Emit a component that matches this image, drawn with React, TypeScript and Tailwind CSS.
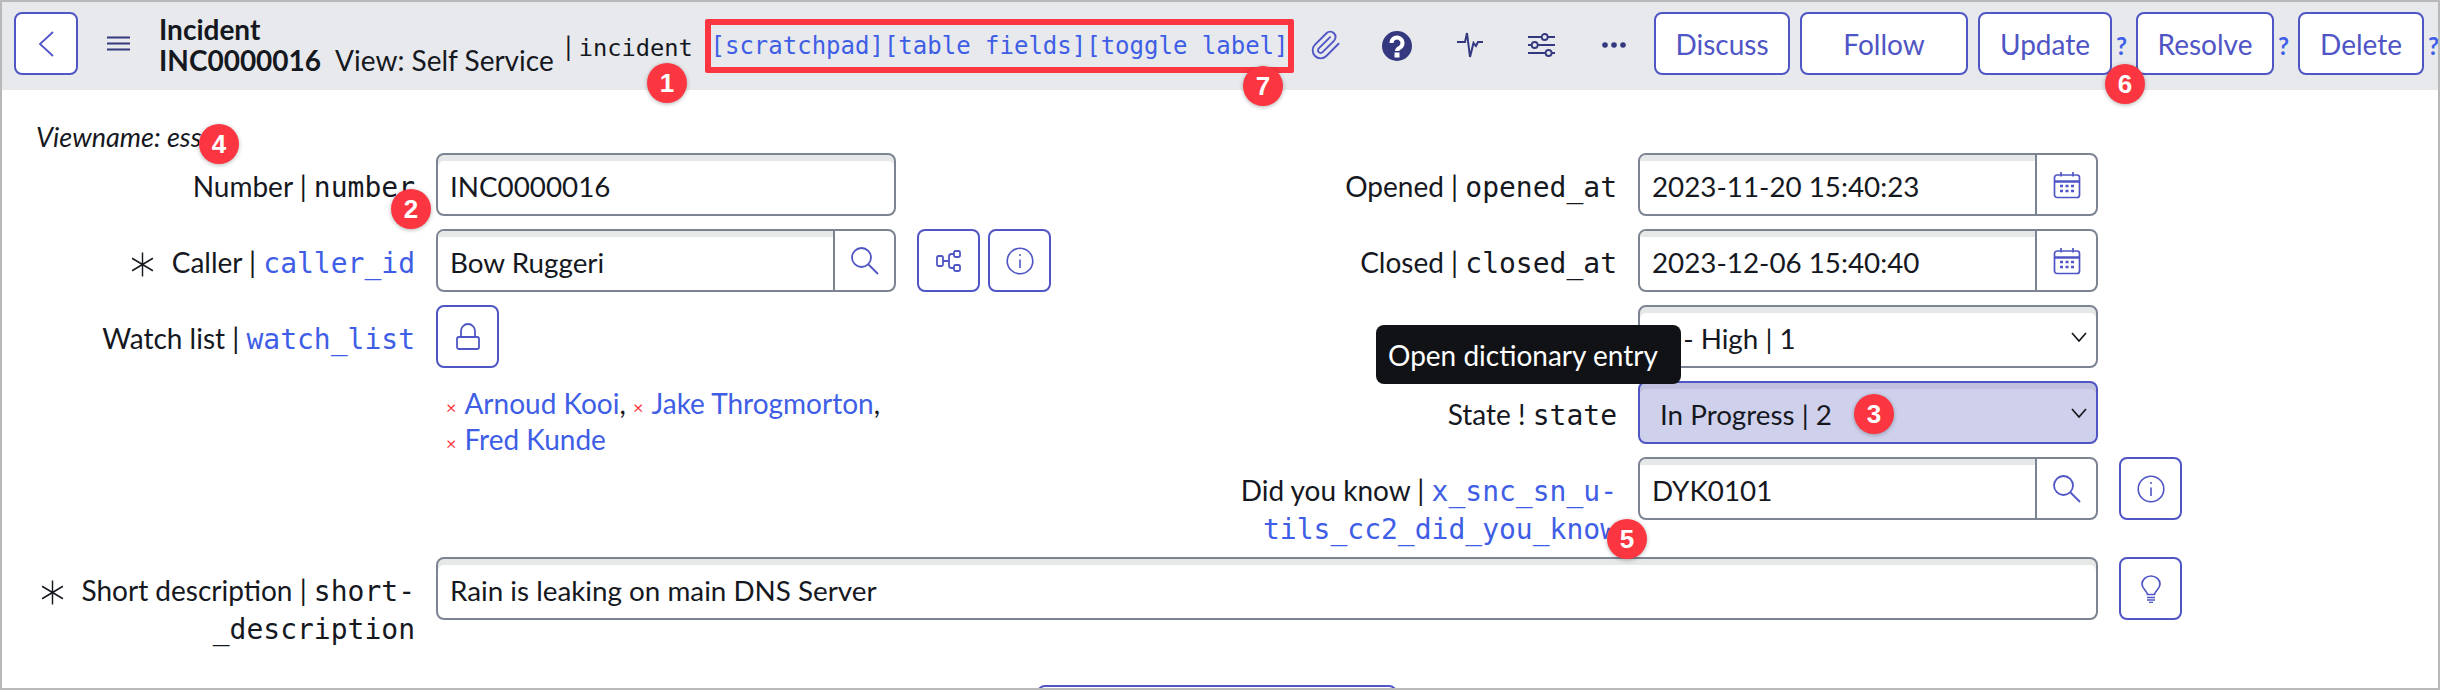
import type { ReactNode } from "react";

const Mono = ({ children, blue }: { children: ReactNode; blue?: boolean }) => (
  <span className={`font-['DejaVu_Sans_Mono',monospace] text-[28px] ${blue ? "text-[#3f5ee6]" : ""}`}>
    {children}
  </span>
);

const Badge = ({ n, x, y }: { n: number; x: number; y: number }) => (
  <span
    className="absolute flex h-10 w-10 -translate-x-1/2 -translate-y-1/2 items-center justify-center rounded-full bg-[#fb3640] font-['Liberation_Sans',sans-serif] text-[26px] font-bold text-white shadow-[0_1px_4px_rgba(0,0,0,0.3)]"
    style={{ left: x, top: y }}
  >
    {n}
  </span>
);

const Star = () => (
  <svg viewBox="0 0 24 24" className="mr-[17px] inline-block h-[25px] w-[25px] -translate-y-[1px] align-middle" fill="none" stroke="#15181e" strokeWidth="1.4">
    <path d="M12 0.5v23M2 6l20 12M22 6L2 18" />
  </svg>
);

const HeaderBtn = ({ children, w }: { children: ReactNode; w: string }) => (
  <button className={`-mt-[5px] flex h-[63px] shrink-0 items-center justify-center rounded-lg border-2 border-[#4f55c4] bg-white text-[28px] text-[#4f55c4] ${w}`}>
    {children}
  </button>
);

const Help = () => <span className="w-[24px] shrink-0 pl-[4px] text-[24px] font-bold text-[#3f5ee6]">?</span>;

const IconBtn = ({ children }: { children: ReactNode }) => (
  <button className="flex h-[63px] w-[63px] shrink-0 items-center justify-center rounded-lg border-2 border-[#4f55c4] bg-white">
    {children}
  </button>
);

const SearchIcon = () => (
  <svg viewBox="0 0 28 28" className="h-7 w-7" fill="none" stroke="#4f55c4" strokeWidth="1.8">
    <circle cx="10.500" cy="10.500" r="9.500" />
    <path d="M17.500 17.500L27 27" />
  </svg>
);

const InfoIcon = () => (
  <svg viewBox="0 0 28 28" className="h-7 w-7" fill="none" stroke="#4f55c4" strokeWidth="1.6">
    <circle cx="14" cy="14" r="12.800" />
    <path d="M14 12.500v8.500" />
    <circle cx="14" cy="8" r="1" fill="#4f55c4" stroke="none" />
  </svg>
);

const TreeIcon = () => (
  <svg viewBox="0 0 25 22" className="h-[22px] w-[25px]" fill="none" stroke="#4f55c4" strokeWidth="1.800">
    <rect x="1" y="6" width="6" height="10" rx="1.500" />
    <rect x="18" y="1" width="6" height="6" rx="1.500" />
    <rect x="18" y="15" width="6" height="6" rx="1.500" />
    <path d="M7 11h6M18 4h-2.500a2.500 2.500 0 0 0-2.500 2.500v9a2.500 2.500 0 0 0 2.500 2.500H18" />
  </svg>
);

const CalendarIcon = () => (
  <svg viewBox="0 0 28 28" className="h-7 w-7" fill="none" stroke="#4f55c4" strokeWidth="1.7">
    <rect x="1.500" y="4" width="25" height="22.500" rx="2.500" />
    <path d="M1.500 10.500h25" strokeWidth="2.500" />
    <path d="M8 1v4.500M20 1v4.500" />
    <path d="M7 15h3M12.500 15h3M18 15h3M7 20h3M12.500 20h3M18 20h3" strokeWidth="2.600" />
  </svg>
);

const Chevron = () => (
  <svg viewBox="0 0 16 10" className="h-[10px] w-[16px]" fill="none" stroke="#15181e" strokeWidth="1.700">
    <path d="M1 1l7 8 7-8" />
  </svg>
);

const inputBox = "h-[63px] rounded-lg border-2 border-[#7c8492] bg-white";
const stripe = "shadow-[inset_0_6px_0_#e6e8e8]";

const TextInput = ({ value, className }: { value: string; className: string }) => (
  <div className={`flex items-center pt-[4px] pl-[12px] text-[27.8px] ${inputBox} ${stripe} ${className}`}>{value}</div>
);

const AddonInput = ({ value, children }: { value: string; children: ReactNode }) => (
  <div className={`flex w-[460px] shrink-0 overflow-hidden ${inputBox}`}>
    <div className={`flex flex-1 items-center pt-[4px] pl-[12px] text-[27.8px] ${stripe}`}>{value}</div>
    <div className="flex w-[61px] items-center justify-center border-l-2 border-[#7c8492]">{children}</div>
  </div>
);

const SelectBox = ({ value, active }: { value: string; active?: boolean }) => (
  <div
    className={`flex h-[63px] w-[460px] shrink-0 items-center justify-between rounded-lg border-2 pl-[20px] pr-[9px] text-[27.8px] ${
      active
        ? "border-[#4f55c4] bg-[#cfd1ec] shadow-[inset_0_6px_0_#bfc1de]"
        : "border-[#7c8492] bg-white shadow-[inset_0_6px_0_#e6e8e8]"
    }`}
  >
    <span className="pt-[4px]">{value}</span>
    <Chevron />
  </div>
);

const Row = ({ label, children }: { label: ReactNode; children: ReactNode }) => (
  <div className="flex gap-[21px]">
    <div className="w-[379px] shrink-0 pt-[15px] text-right text-[28px] leading-[36px] whitespace-nowrap">{label}</div>
    <div className="flex flex-1 gap-[8px]">{children}</div>
  </div>
);

const Person = ({ name, comma }: { name: string; comma?: boolean }) => (
  <span className="whitespace-nowrap">
    <span className="mr-[8px] text-[18px] leading-none text-[#fb3640]">×</span>
    <span className="text-[#3f5ee6]">{name}</span>
    {comma && ","}
  </span>
);

export default function App() {
  return (
    <div className="relative h-[690px] w-[2440px] overflow-hidden border-2 border-[#b9b9b9] bg-white font-['Lato',sans-serif] text-[#15181e]">
      <header className="flex h-[88px] items-center bg-[#e8e9ed] pl-[12px]">
        <button className="-mt-[5px] flex h-[63px] w-[64px] shrink-0 items-center justify-center rounded-lg border-2 border-[#4f55c4] bg-white">
          <svg viewBox="0 0 16 26" className="h-[26px] w-4" fill="none" stroke="#4f55c4" strokeWidth="1.800">
            <path d="M15 1L2 13l13 12" />
          </svg>
        </button>
        <svg viewBox="0 0 23 15" className="-mt-[5px] ml-[29px] h-[15px] w-[23px] shrink-0" fill="none" stroke="#33387f" strokeWidth="2.200">
          <path d="M0 1.500h23M0 7.500h23M0 13.500h23" />
        </svg>
        <div className="-mt-[2px] ml-[29px] w-[406px] shrink-0 text-[28px] leading-[31px]">
          <div className="font-bold">Incident</div>
          <div className="whitespace-nowrap">
            <span className="font-bold">INC0000016</span>
            <span className="ml-[14px]">View: Self Service</span>
          </div>
        </div>
        <div className="w-[140px] shrink-0 whitespace-nowrap text-[27px]">
          | <span className="font-['DejaVu_Sans_Mono',monospace] text-[23.7px]">incident</span>
        </div>
        <div className="flex h-[54px] w-[589px] shrink-0 items-center justify-center rounded-[2px] border-[6px] border-[#fb3640] font-['DejaVu_Sans_Mono',monospace] text-[24px] whitespace-nowrap text-[#3f5ee6]">
          [scratchpad][table fields][toggle label]
        </div>
        <svg viewBox="0 0 24 24" className="-mt-[3px] ml-[16px] h-8 w-8 shrink-0" fill="none" stroke="#4f55c4" strokeWidth="1.400" strokeLinecap="round" strokeLinejoin="round">
          <path d="M21.440 11.050l-9.190 9.190a6 6 0 0 1-8.490-8.490l8.570-8.570A4 4 0 1 1 18 8.840l-8.590 8.570a2 2 0 0 1-2.830-2.830l8.490-8.480" />
        </svg>
        <svg viewBox="0 0 30 30" className="ml-[40px] h-[30px] w-[30px] shrink-0">
          <circle cx="15" cy="15" r="15" fill="#33387f" />
          <path d="M9.500 12a5.500 5.500 0 1 1 8.500 4.600c-1.800 1-3 1.600-3 3.400" fill="none" stroke="#fff" strokeWidth="4" />
          <rect x="12.500" y="21.500" width="5" height="5" fill="#fff" />
        </svg>
        <svg viewBox="0 0 26 26" className="-mt-[3px] ml-[45px] h-[26px] w-[26px] shrink-0" fill="none" stroke="#33387f" strokeWidth="2">
          <path d="M0 10h8l2-9 3 24 3.500-14 2.500 3 2-4h5" />
        </svg>
        <svg viewBox="0 0 27 24" className="-mt-[3px] ml-[45px] h-6 w-[27px] shrink-0" fill="none" stroke="#33387f" strokeWidth="1.800">
          <path d="M0 4h27M0 12h27M0 20h27" />
          <circle cx="16.700" cy="4" r="3" fill="#e8e9ed" />
          <circle cx="6.700" cy="12" r="3" fill="#e8e9ed" />
          <circle cx="20.600" cy="20" r="3" fill="#e8e9ed" />
        </svg>
        <svg viewBox="0 0 24 6" className="-mt-[3px] ml-[47px] h-[6px] w-6 shrink-0" fill="#33387f">
          <circle cx="3" cy="3" r="2.800" />
          <circle cx="12" cy="3" r="2.800" />
          <circle cx="21" cy="3" r="2.800" />
        </svg>
        <div className="ml-[28px] flex shrink-0 items-center gap-[10px]">
          <HeaderBtn w="w-[136px]">Discuss</HeaderBtn>
          <HeaderBtn w="w-[168px]">Follow</HeaderBtn>
          <HeaderBtn w="w-[134px]">Update</HeaderBtn>
        </div>
        <Help />
        <HeaderBtn w="w-[138px]">Resolve</HeaderBtn>
        <Help />
        <HeaderBtn w="w-[126px]">Delete</HeaderBtn>
        <Help />
      </header>

      <main className="pl-[34px]">
        <div className="h-[63px] pt-[29px] text-[27px] leading-[36px] italic">Viewname: ess</div>
        <div className="flex">
          <div className="flex w-[1202px] shrink-0 flex-col gap-[13px]">
            <Row label={<>Number | <Mono>number</Mono></>}>
              <TextInput value="INC0000016" className="w-[460px]" />
            </Row>
            <Row label={<><Star />Caller | <Mono blue>caller_id</Mono></>}>
              <AddonInput value="Bow Ruggeri"><SearchIcon /></AddonInput>
              <div className="ml-[13px]"><IconBtn><TreeIcon /></IconBtn></div>
              <IconBtn><InfoIcon /></IconBtn>
            </Row>
            <Row label={<>Watch list | <Mono blue>watch_list</Mono></>}>
              <div>
                <IconBtn>
                  <svg viewBox="0 0 24 27" className="h-[27px] w-6" fill="none" stroke="#4f55c4" strokeWidth="1.800">
                    <rect x="1" y="14" width="22" height="12" rx="2" />
                    <path d="M5 14V8a7 7 0 0 1 14 0v6" />
                  </svg>
                </IconBtn>
                <div className="mt-[17px] w-[460px] pl-[10px] text-[28px] leading-[36px]">
                  <Person name="Arnoud Kooi" comma /> <Person name="Jake Throgmorton" comma /> <Person name="Fred Kunde" />
                </div>
              </div>
            </Row>
          </div>
          <div className="flex w-[960px] shrink-0 flex-col gap-[13px]">
            <Row label={<>Opened | <Mono>opened_at</Mono></>}>
              <AddonInput value="2023-11-20 15:40:23"><CalendarIcon /></AddonInput>
            </Row>
            <Row label={<>Closed | <Mono>closed_at</Mono></>}>
              <AddonInput value="2023-12-06 15:40:40"><CalendarIcon /></AddonInput>
            </Row>
            <Row label="">
              <SelectBox value="1 - High | 1" />
            </Row>
            <Row label={<>State ! <Mono>state</Mono></>}>
              <SelectBox value="In Progress | 2" active />
            </Row>
            <Row label={<>Did you know | <Mono blue>x_snc_sn_u-<br />tils_cc2_did_you_know</Mono></>}>
              <AddonInput value="DYK0101"><SearchIcon /></AddonInput>
              <div className="ml-[13px]"><IconBtn><InfoIcon /></IconBtn></div>
            </Row>
          </div>
        </div>
        <div className="mt-[9px] w-[2146px]">
          <Row label={<><Star />Short description | <Mono>short-<br />_description</Mono></>}>
            <TextInput value="Rain is leaking on main DNS Server" className="flex-1" />
            <div className="ml-[13px]">
              <IconBtn>
                <svg viewBox="0 0 20 28" className="h-7 w-5" fill="none" stroke="#4f55c4" strokeWidth="1.700">
                  <path d="M6.500 19.500c0-3.500-5.500-5-5.500-10.500a9 8 0 0 1 18 0c0 5.500-5.500 7-5.500 10.500z" />
                  <path d="M6 22.500h8M6 25h8M8 27.500h4" />
                </svg>
              </IconBtn>
            </div>
          </Row>
        </div>
        <button className="mt-[37px] ml-[1001px] h-[63px] w-[360px] rounded-lg border-2 border-[#4f55c4] bg-white" />
      </main>

      <div className="absolute top-[323px] left-[1374px] flex h-[59px] w-[305px] items-center pl-[12px] rounded-lg bg-[#111216] text-[28px] text-white">
        Open dictionary entry
      </div>

      <Badge n={1} x={665} y={81} />
      <Badge n={7} x={1261} y={84} />
      <Badge n={6} x={2123} y={82} />
      <Badge n={4} x={217} y={142} />
      <Badge n={2} x={409} y={207} />
      <Badge n={3} x={1872} y={412} />
      <Badge n={5} x={1625} y={537} />
    </div>
  );
}
